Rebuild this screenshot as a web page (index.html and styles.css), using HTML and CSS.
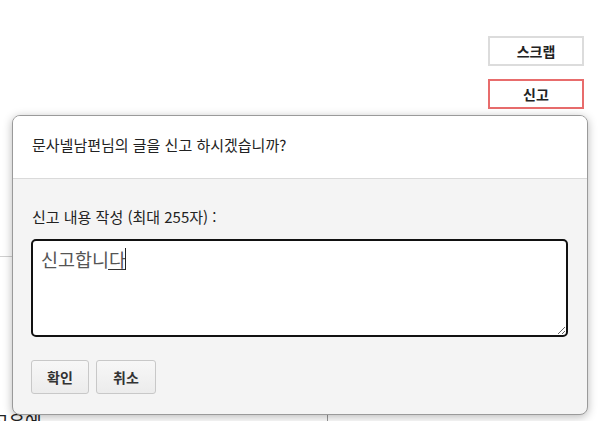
FILE: index.html
```html
<!DOCTYPE html>
<html lang="ko">
<head>
<meta charset="utf-8">
<link rel="stylesheet" href="styles.css">
</head>
<body>
<div class="page">
  <div class="actions">
    <button class="act scrap">스크랩</button>
    <button class="act report">신고</button>
  </div>
  <div class="content">
    <div class="rule"></div>
    <div class="bottom-row">
      <span class="cut-text">고운에</span>
      <span class="divider"></span>
    </div>
  </div>
</div>

<div class="dialog">
  <div class="dlg-head">문사넬남편님의 글을 신고 하시겠습니까?</div>
  <div class="dlg-body">
    <label class="dlg-label" for="reason">신고 내용 작성 (최대 255자) :</label>
    <div class="ta-wrap">
      <textarea id="reason" class="dlg-text">신고합니다</textarea>
      <span class="ime-line"></span>
      <span class="caret"></span>
    </div>
    <div class="dlg-buttons">
      <button class="btn">확인</button>
      <button class="btn">취소</button>
    </div>
  </div>
</div>
</body>
</html>
```

FILE: styles.css
```css
* { box-sizing: border-box; }
html, body {
  margin: 0;
  padding: 0;
  background: #fff;
  font-family: "Noto Sans CJK KR", "Noto Sans", sans-serif;
  overflow: hidden;
  height: 421px;
}
.page {
  width: 603px;
  height: 421px;
  display: flex;
  flex-direction: column;
}
.actions {
  display: flex;
  flex-direction: column;
  align-items: flex-end;
  gap: 13px;
  padding: 36px 19px 0 0;
}
.act {
  width: 96px;
  height: 30px;
  background: #fff;
  font-family: inherit;
  font-weight: bold;
  font-size: 14px;
  color: #222;
  padding: 0;
  line-height: 26px;
}
.scrap { border: 2px solid #dcdcdc; }
.report { border: 2px solid #e86c6c; }
.content {
  flex: 1;
  display: flex;
  flex-direction: column;
}
.rule {
  margin-top: 147px;
  height: 1px;
  width: 20px;
  background: #d0d0d0;
}
.bottom-row {
  margin-top: auto;
  height: 8px;
  display: flex;
}
.cut-text {
  width: 56px;
  font-size: 18px;
  line-height: 18px;
  color: #222;
  margin-left: -8px;
  margin-top: -1px;
  white-space: nowrap;
}
.divider {
  margin-left: 279px;
  width: 1px;
  background: #999;
}
.dialog {
  position: absolute;
  left: 12px;
  top: 115px;
  width: 576px;
  height: 300px;
  border: 1px solid #9a9a9a;
  border-radius: 8px;
  background: #f4f4f4;
  box-shadow: 0 2px 10px rgba(0,0,0,0.28);
  overflow: hidden;
  display: flex;
  flex-direction: column;
}
.dlg-head {
  height: 63px;
  background: #fff;
  border-bottom: 1px solid #dadada;
  padding: 19px 0 0 19px;
  font-size: 15px;
  line-height: 20px;
  color: #222;
}
.dlg-body {
  padding: 28px 18px 0 18px;
  display: flex;
  flex-direction: column;
}
.dlg-label {
  font-size: 15px;
  line-height: 20px;
  color: #222;
  margin-left: 1px;
}
.ta-wrap {
  position: relative;
  margin-top: 12px;
}
.dlg-text {
  display: block;
  width: 537px;
  height: 98px;
  border: 2px solid #111;
  border-radius: 5px;
  background: #fff;
  font-family: inherit;
  font-size: 18.5px;
  line-height: 24px;
  color: #555;
  padding: 6px 8px;
  resize: both;
  outline: none;
}
.ime-line {
  position: absolute;
  left: 77px;
  top: 30px;
  width: 17px;
  height: 1px;
  background: #333;
}
.caret {
  position: absolute;
  left: 94px;
  top: 9px;
  width: 1px;
  height: 22px;
  background: #222;
}
.dlg-buttons {
  display: flex;
  gap: 7px;
  margin-top: 23px;
}
.btn {
  height: 34px;
  padding: 0 14px;
  border: 1px solid #c8c8c8;
  border-radius: 3px;
  background: linear-gradient(#f7f7f7, #ececec);
  font-family: inherit;
  font-weight: bold;
  font-size: 14px;
  color: #333;
}
.btn:first-child { width: 58px; }
.btn:last-child { width: 60px; }
```
